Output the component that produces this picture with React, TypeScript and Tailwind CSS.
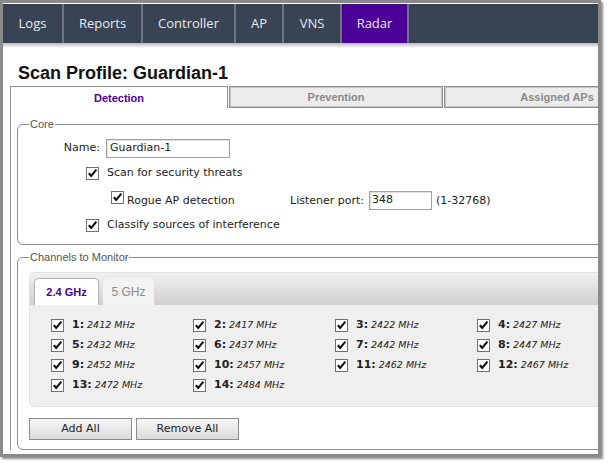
import React from "react";

const Check = ({ className = "" }: { className?: string }) => (
  <span
    className={
      "inline-flex w-[13px] h-[13px] border border-[#707070] bg-white items-center justify-center shrink-0 " +
      className
    }
  >
    <svg width="11" height="11" viewBox="0 0 11 11">
      <path d="M1.8 5.2 L4.2 7.8 L9.4 1.6" fill="none" stroke="#111" strokeWidth="2.1" />
    </svg>
  </span>
);

const navItems = [
  { label: "Logs", w: "w-[61px]" },
  { label: "Reports", w: "w-[79px]" },
  { label: "Controller", w: "w-[93px]" },
  { label: "AP", w: "w-[48px]" },
  { label: "VNS", w: "w-[58px]" },
];

const channels = [
  ["1", "2412"],
  ["2", "2417"],
  ["3", "2422"],
  ["4", "2427"],
  ["5", "2432"],
  ["6", "2437"],
  ["7", "2442"],
  ["8", "2447"],
  ["9", "2452"],
  ["10", "2457"],
  ["11", "2462"],
  ["12", "2467"],
  ["13", "2472"],
  ["14", "2484"],
];

export default function App() {
  return (
    <div className="w-[608px] h-[465px] bg-white font-['DejaVu_Sans',sans-serif] text-[11px] text-[#222]">
      <div className="w-[601px] h-[457px] border-[3px] border-[#8a8a8a] shadow-[2px_2px_2px_rgba(0,0,0,0.45)] overflow-hidden bg-white">
        <div className="pt-px">
          <nav className="flex h-[39px] bg-[#384353] font-['Open_Sans',sans-serif] text-[13px] text-[#e6eaee]">
            {navItems.map((n) => (
              <div
                key={n.label}
                className={"flex items-center justify-center border-r-2 border-[#6e7580] " + n.w}
              >
                {n.label}
              </div>
            ))}
            <div className="flex items-center justify-center w-[67px] bg-[#4b0096] border-r-2 border-[#6e7580]">
              Radar
            </div>
            <div className="flex-1" />
          </nav>
          <div className="h-[5px] bg-gradient-to-b from-[#b9b9b9] to-white" />
        </div>

        <div className="mt-[14px] pl-[15px] h-[22px] leading-[22px] font-['Liberation_Sans',sans-serif] font-bold text-[18px] text-[#111]">
          Scan Profile: Guardian-1
        </div>

        <div className="mt-[2px] ml-[7px] w-[700px]">
          <div className="flex h-[22px] font-['Liberation_Sans',sans-serif] font-bold text-[11px]">
            <div className="w-[218px] bg-white border border-b-0 border-[#8f8f8f] flex items-center justify-center pt-px text-[#4b0096]">
              Detection
            </div>
            <div className="ml-px w-[214px] bg-[#ececec] border border-[#8f8f8f] shadow-[inset_1px_1px_0_#c4c4c4,inset_-1px_-1px_0_#c4c4c4] flex items-center justify-center text-[#8a8a8a]">
              Prevention
            </div>
            <div className="ml-px w-[226px] bg-[#ececec] border border-[#8f8f8f] shadow-[inset_1px_1px_0_#c4c4c4,inset_-1px_-1px_0_#c4c4c4] flex items-center justify-center text-[#8a8a8a]">
              Assigned APs
            </div>
          </div>

          <div className="border-l border-[#8f8f8f] pl-[6px] pt-[10px]">
            {/* Core */}
            <fieldset className="w-[640px] border border-[#8c8c8c] rounded-[6px] pl-[11px] pb-[12px]">
              <legend className="px-px font-['Liberation_Sans',sans-serif] text-[11px] leading-[13px] text-[#555]">
                Core
              </legend>
              <div className="flex items-center mt-[8px] h-[19px]">
                <span className="w-[71px] text-right">Name:</span>
                <span className="ml-[6px] w-[124px] h-[19px] border border-[#a0a0a0] shadow-[inset_1px_1px_0_#e0e0e0] flex items-center pl-[3px]">
                  Guardian-1
                </span>
              </div>
              <div className="flex items-center mt-[9px] h-[13px] ml-[57px]">
                <Check />
                <span className="ml-[8px]">Scan for security threats</span>
              </div>
              <div className="flex items-center mt-[11px] h-[19px]">
                <Check className="ml-[82px] self-start" />
                <span className="ml-[3px] w-[163px] mt-[2px]">Rogue AP detection</span>
                <span className="mt-[2px]">Listener port:</span>
                <span className="ml-[5px] w-[63px] h-[19px] border border-[#a0a0a0] shadow-[inset_1px_1px_0_#e0e0e0] flex items-center pl-[2px]">
                  348
                </span>
                <span className="ml-[4px] mt-[2px]">(1-32768)</span>
              </div>
              <div className="flex items-center mt-[9px] h-[13px] ml-[57px]">
                <Check />
                <span className="ml-[8px]">Classify sources of interference</span>
              </div>
            </fieldset>

            {/* Channels */}
            <fieldset className="mt-[6px] w-[640px] border border-[#8c8c8c] rounded-[6px] pl-[11px] pb-[9px]">
              <legend className="px-px font-['Liberation_Sans',sans-serif] text-[11px] leading-[13px] text-[#555]">
                Channels to Monitor
              </legend>
              <div className="mt-[8px] rounded-[5px] bg-[#efefef] border border-[#e2e2e2]">
                <div className="h-[32px] pt-[5px] pl-[4px] flex items-end rounded-t-[5px] bg-gradient-to-b from-[#f0f0f0] to-[#d0d0d0] font-['Liberation_Sans',sans-serif] font-bold text-[11px]">
                  <div className="w-[65px] h-[27px] bg-white border border-b-0 border-[#b0b0b0] rounded-t-[5px] flex items-center justify-center text-[#4b0096]">
                    2.4 GHz
                  </div>
                  <div className="ml-[4px] w-[51px] h-[27px] bg-[#f3f3f3] rounded-t-[5px] flex items-center justify-center text-[#8a8a8a] font-normal text-[12px]">
                    5 GHz
                  </div>
                </div>
                <div className="pl-[21px] pt-[14px] pb-[7px] grid grid-cols-[142px_142px_142px_142px]">
                  {channels.map(([n, f]) => (
                    <div key={n} className="flex items-center h-[20px] pb-[7px]">
                      <Check />
                      <span className="ml-[8px] font-bold text-[11px]">{n}:</span>
                      <span className="ml-[3px] italic text-[9.5px] text-[#222]">{f} MHz</span>
                    </div>
                  ))}
                </div>
              </div>
              <div className="flex gap-[4px] mt-[11px]">
                <button className="w-[103px] h-[22px] border border-[#8c8c8c] bg-gradient-to-b from-[#f7f7f7] to-[#dadada] text-[11px] text-[#222]">
                  Add All
                </button>
                <button className="w-[103px] h-[22px] border border-[#8c8c8c] bg-gradient-to-b from-[#f7f7f7] to-[#dadada] text-[11px] text-[#222]">
                  Remove All
                </button>
              </div>
            </fieldset>
          </div>
        </div>
      </div>
    </div>
  );
}
